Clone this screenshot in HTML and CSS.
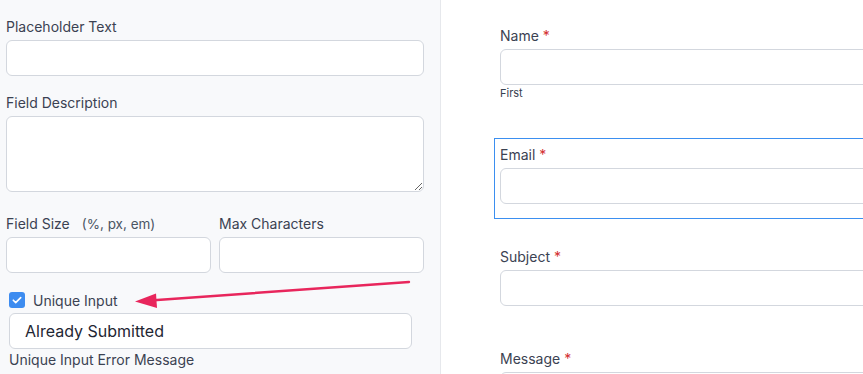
FILE: index.html
```html
<!DOCTYPE html>
<html>
<head>
<meta charset="utf-8">
<link rel="stylesheet" href="styles.css">
</head>
<body>
<div class="page">
  <aside class="settings">
    <label class="lbl">Placeholder Text</label>
    <input class="inp" type="text">
    <label class="lbl lbl-gap">Field Description</label>
    <textarea class="inp area"></textarea>
    <div class="pair">
      <div class="col">
        <label class="lbl">Field Size<span class="hint">(%, px, em)</span></label>
        <input class="inp" type="text">
      </div>
      <div class="col">
        <label class="lbl">Max Characters</label>
        <input class="inp" type="text">
      </div>
    </div>
    <div class="check-row">
      <span class="check"><svg width="16" height="16" viewBox="0 0 16 16"><path d="M4.3 8.2l2.4 2.4 5-5" fill="none" stroke="#fff" stroke-width="1.6" stroke-linecap="round" stroke-linejoin="round"/></svg></span>
      <span class="check-text">Unique Input</span>
    </div>
    <div class="inp err-inp">Already Submitted</div>
    <div class="err-lbl">Unique Input Error Message</div>
  </aside>
  <main class="preview">
    <div class="field">
      <div class="lbl">Name <span class="req">*</span></div>
      <div class="inp wide"></div>
      <div class="sub">First</div>
    </div>
    <div class="field active">
      <div class="lbl">Email <span class="req">*</span></div>
      <div class="inp wide"></div>
    </div>
    <div class="field">
      <div class="lbl">Subject <span class="req">*</span></div>
      <div class="inp wide"></div>
    </div>
    <div class="field">
      <div class="lbl">Message <span class="req">*</span></div>
      <div class="inp wide"></div>
    </div>
  </main>
  <svg class="arrow" width="863" height="374" viewBox="0 0 863 374">
    <line x1="409" y1="282" x2="150" y2="300.5" stroke="#e8265c" stroke-width="2.4" stroke-linecap="round"/>
    <polygon points="135,301.5 156,293.5 157,308" fill="#e8265c"/>
  </svg>
</div>
</body>
</html>
```

FILE: styles.css
```css
* { box-sizing: border-box; }
html, body { margin: 0; padding: 0; }
body {
  font-family: Inter, "Noto Sans", sans-serif;
  color: #374151;
  background: #fff;
  width: 863px;
  height: 374px;
  overflow: hidden;
}
.page {
  position: relative;
  display: flex;
  width: 863px;
  height: 374px;
  overflow: hidden;
}
.settings {
  flex: 0 0 441px;
  background: #f8f9fb;
  border-right: 1px solid #e6e8ec;
  padding: 17px 16px 0 6px;
  display: flex;
  flex-direction: column;
}
.lbl {
  display: block;
  font-size: 14px;
  line-height: 20px;
  color: #3b4252;
  margin-bottom: 3px;
  white-space: nowrap;
}
.lbl-gap { margin-top: 17px; }
.hint { margin-left: 12px; font-size: 13.5px; color: #4b5563; }
.inp {
  display: block;
  width: 100%;
  height: 36px;
  background: #fff;
  border: 1px solid #d3d7de;
  border-radius: 6px;
  font-family: inherit;
  margin: 0;
  outline: none;
}
.area {
  height: 76px;
  resize: vertical;
}
.pair {
  display: flex;
  gap: 8px;
  margin-top: 22px;
}
.col { flex: 1 1 0; min-width: 0; }
.check-row {
  display: flex;
  align-items: center;
  margin: 17px 0 0 3px;
  height: 20px;
}
.check {
  width: 16px;
  height: 16px;
  border-radius: 3px;
  background: #3d8cf0;
  display: flex;
}
.check-text {
  margin-left: 8px;
  font-size: 14px;
  color: #3b4252;
  line-height: 20px;
  position: relative;
  top: 1px;
}
.err-inp {
  width: 403px;
  margin: 3px 0 0 3px;
  padding-left: 15px;
  font-size: 16px;
  line-height: 34px;
  color: #1f2633;
}
.err-lbl {
  margin: 1px 0 0 3px;
  font-size: 14px;
  line-height: 20px;
  color: #3b4252;
}
.preview {
  flex: 1 1 auto;
  min-width: 0;
  padding: 19px 0 0 53px;
  display: flex;
  flex-direction: column;
  gap: 21px;
}
.field {
  width: 520px;
  flex: 0 0 auto;
  border: 1px solid transparent;
  padding: 6px 5px 14px 5px;
}
.field .lbl { margin-bottom: 3px; }
.field.active { border-color: #3b8ff0; }
.req { color: #d3302f; }
.sub {
  font-size: 11px;
  line-height: 14px;
  margin-top: 1px;
  color: #374151;
}
.field:first-child { padding-bottom: 5px; height: 98px; }
.arrow {
  position: absolute;
  left: 0;
  top: 0;
  pointer-events: none;
}
```
